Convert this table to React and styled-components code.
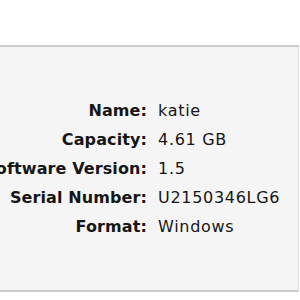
import { Fragment } from 'react';
import styled, { createGlobalStyle } from 'styled-components';

const GlobalStyle = createGlobalStyle`
    html, body {
        margin: 0;
        padding: 0;
        background: #ffffff;
    }
`;

const Page = styled.div`
    width: 300px;
    height: 300px;
    padding-top: 45px;
    box-sizing: border-box;
    overflow: hidden;
`;

const Panel = styled.div`
    width: 299px;
    height: 247px;
    box-sizing: border-box;
    background: #f5f5f5;
    border-top: 2px solid #cbcbcb;
    border-bottom: 2px solid #cbcbcb;
    border-right: 1px solid #dedede;
    padding-top: 49px;
    overflow: hidden;
`;

const InfoGrid = styled.div`
    display: grid;
    grid-template-columns: 147px auto;
    column-gap: 11px;
    font-family: "DejaVu Sans", sans-serif;
    font-size: 16px;
    line-height: 29px;
    color: #161616;
`;

const Label = styled.div`
    justify-self: end;
    white-space: nowrap;
    font-weight: bold;
    letter-spacing: 0.1px;
`;

const Value = styled.div`
    white-space: nowrap;
    letter-spacing: 0.7px;
`;

const rows = [
    ['Name:', 'katie'],
    ['Capacity:', '4.61 GB'],
    ['Software Version:', '1.5'],
    ['Serial Number:', 'U2150346LG6'],
    ['Format:', 'Windows'],
];

const App = () => {
    return (
        <>
            <GlobalStyle />
            <Page>
                <Panel>
                    <InfoGrid>
                        {rows.map(([label, value]) => (
                            <Fragment key={label}>
                                <Label>{label}</Label>
                                <Value>{value}</Value>
                            </Fragment>
                        ))}
                    </InfoGrid>
                </Panel>
            </Page>
        </>
    )
}

export default App;
